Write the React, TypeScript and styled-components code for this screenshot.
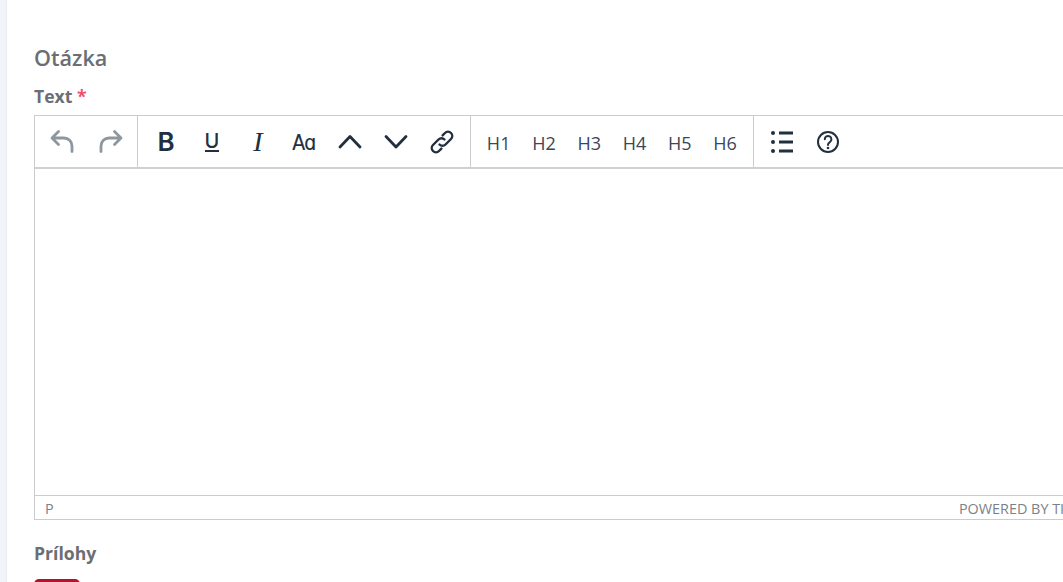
import React from "react";
import styled, { createGlobalStyle } from "styled-components";

const Global = createGlobalStyle`
  html, body { margin: 0; padding: 0; height: 100%; background: #fff; overflow: hidden; }
  body { font-family: "Open Sans", "Liberation Sans", sans-serif; }
`;

const Page = styled.div`
  display: flex;
  width: 1063px;
  height: 582px;
  overflow: hidden;
`;
const Rail = styled.div`
  flex: 0 0 7px;
  background: #f1f4f9;
  border-right: 1px solid #e9edf3;
  box-sizing: border-box;
`;
const Content = styled.main`
  flex: 1 0 auto;
  padding: 43px 0 0 27px;
  min-width: 0;
`;
const Title = styled.h2`
  margin: 0;
  font-size: 21.6px;
  line-height: 29px;
  font-weight: 600;
  color: #6b6e72;
`;
const FieldLabel = styled.label`
  display: block;
  font-size: 17.6px;
  line-height: 24px;
  font-weight: 700;
  color: #6b6e72;
`;
const QuestionLabel = styled(FieldLabel)`
  margin: 12px 0 7px;
`;
const AttachLabel = styled(FieldLabel)`
  margin-top: 21px;
`;
const Star = styled.span`
  color: #f0506e;
`;
const Editor = styled.div`
  width: 1050px;
  box-sizing: border-box;
  border: 1px solid #ccc;
`;
const Toolbar = styled.div`
  display: flex;
  height: 51px;
  border-bottom: 2px solid #d0d0d0;
  box-sizing: content-box;
`;
const Group = styled.div<{ $pad: number; $end?: boolean }>`
  display: flex;
  align-items: center;
  padding: 0 ${(p) => p.$pad}px;
  border-right: ${(p) => (p.$end ? "none" : "1px solid #ccc")};
`;
const ToolBtn = styled.button<{ $w: number; $muted?: boolean }>`
  all: unset;
  display: flex;
  align-items: center;
  justify-content: center;
  width: ${(p) => p.$w}px;
  height: 52px;
  color: ${(p) => (p.$muted ? "#8f979e" : "#222f3e")};
`;
const HeadingText = styled.span`
  font-size: 18px;
  line-height: 52px;
  padding-top: 3px;
  color: #3b4757;
`;
const BoldGlyph = styled.span`
  font-family: Inter, sans-serif;
  font-size: 26px;
  line-height: 24px;
  font-weight: 600;
  padding-top: 1px;
`;
const UnderGlyph = styled.span`
  font-family: Inter, sans-serif;
  font-size: 20px;
  line-height: 18px;
  font-weight: 500;
  border-bottom: 2px solid #222f3e;
`;
const ItalicGlyph = styled.span`
  font-family: "Liberation Serif", serif;
  font-size: 28px;
  line-height: 24px;
  font-style: italic;
`;
const CaseGlyph = styled.span`
  font-family: "DejaVu Sans", sans-serif;
  font-size: 21px;
  line-height: 24px;
  letter-spacing: -1px;
  transform: scaleX(0.9);
  padding-top: 2px;
  -webkit-text-stroke: 0.2px currentColor;
`;
const Body = styled.div`
  height: 326px;
`;
const StatusBar = styled.div`
  display: flex;
  align-items: center;
  justify-content: space-between;
  height: 23px;
  padding: 0 0 0 10px;
  border-top: 1px solid #ccc;
  font-size: 14.4px;
  color: #7b818a;
`;
const Brand = styled.span`
  margin-top: 1px;
  white-space: nowrap;
`;
const Path = styled.span`
  margin-top: 1px;
`;
const RedButton = styled.div`
  width: 46px;
  height: 30px;
  margin-top: 14px;
  border-radius: 5px;
  background: #b5122f;
`;

const I: React.FC<{ children: React.ReactNode }> = ({ children }) => (
  <svg width={28} height={28} viewBox="0 0 28 28" fill="none" stroke="currentColor" strokeWidth={2.8} strokeLinecap="round" strokeLinejoin="round">
    {children}
  </svg>
);

export default function App() {
  return (
    <Page>
      <Global />
      <Rail />
      <Content>
        <Title>Otázka</Title>
        <QuestionLabel>
          Text <Star>*</Star>
        </QuestionLabel>
        <Editor>
          <Toolbar>
            <Group $pad={3}>
              <ToolBtn $w={48} $muted>
                <I><path d="M10.5 3.5 L4 10 L10.5 16.5 M4.5 10 H16 a8 8 0 0 1 8 8 V23.5" /></I>
              </ToolBtn>
              <ToolBtn $w={48} $muted>
                <I><path d="M18.5 3.5 L25 10 L18.5 16.5 M24.5 10 H13 a8 8 0 0 0 -8 8 V23.5" /></I>
              </ToolBtn>
            </Group>
            <Group $pad={5}>
              <ToolBtn $w={46}><BoldGlyph>B</BoldGlyph></ToolBtn>
              <ToolBtn $w={46}><UnderGlyph>U</UnderGlyph></ToolBtn>
              <ToolBtn $w={46}><ItalicGlyph>I</ItalicGlyph></ToolBtn>
              <ToolBtn $w={46}><CaseGlyph>Aɑ</CaseGlyph></ToolBtn>
              <ToolBtn $w={46}>
                <I><path d="M4 19 L14 8.5 L24 19" /></I>
              </ToolBtn>
              <ToolBtn $w={46}>
                <I><path d="M4 8.5 L14 19 L24 8.5" /></I>
              </ToolBtn>
              <ToolBtn $w={46}>
                <I>
                  <path strokeWidth={2.4} d="M11.5 16.5 a4.2 4.2 0 0 0 6 0 l5.5-5.5 a4.2 4.2 0 0 0 -6-6 l-2.4 2.4" />
                  <path strokeWidth={2.4} d="M16.5 11.5 a4.2 4.2 0 0 0 -6 0 l-5.5 5.5 a4.2 4.2 0 0 0 6 6 l2.4-2.4" />
                </I>
              </ToolBtn>
            </Group>
            <Group $pad={5}>
              {["H1", "H2", "H3", "H4", "H5", "H6"].map((h) => (
                <ToolBtn key={h} $w={45.3}><HeadingText>{h}</HeadingText></ToolBtn>
              ))}
            </Group>
            <Group $pad={5} $end>
              <ToolBtn $w={46}>
                <I>
                  <path d="M11 5 H25 M11 14 H25 M11 23 H25" strokeLinecap="butt" />
                  <circle cx="5" cy="5" r="2" fill="currentColor" stroke="none" />
                  <circle cx="5" cy="14" r="2" fill="currentColor" stroke="none" />
                  <circle cx="5" cy="23" r="2" fill="currentColor" stroke="none" />
                </I>
              </ToolBtn>
              <ToolBtn $w={46}>
                <I>
                  <circle cx="14" cy="14" r="10" strokeWidth={2} />
                  <path d="M10.8 11.3 a3.3 3.3 0 1 1 5 2.8 c-1.2.8-1.8 1.4-1.8 2.9" strokeWidth={2} />
                  <circle cx="14" cy="20" r="1.3" fill="currentColor" stroke="none" />
                </I>
              </ToolBtn>
            </Group>
          </Toolbar>
          <Body />
          <StatusBar>
            <Path>P</Path>
            <Brand>POWERED BY TINY</Brand>
          </StatusBar>
        </Editor>
        <AttachLabel>Prílohy</AttachLabel>
        <RedButton />
      </Content>
    </Page>
  );
}
